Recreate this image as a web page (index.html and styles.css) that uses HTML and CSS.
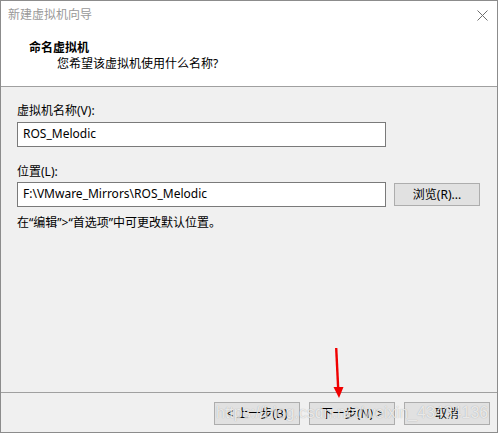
FILE: index.html
```html
<!DOCTYPE html>
<html lang="zh-CN">
<head>
<meta charset="utf-8">
<title>新建虚拟机向导</title>
<link rel="stylesheet" href="styles.css">
</head>
<body>
<div class="window">
  <div class="titlebar">
    <span class="title">新建虚拟机向导</span>
    <svg class="close" width="11" height="11" viewBox="0 0 11 11"><path d="M0.5 0.5 L10.5 10.5 M10.5 0.5 L0.5 10.5" stroke="#6e6e6e" stroke-width="1" fill="none"/></svg>
  </div>
  <div class="header">
    <div class="h-title">命名虚拟机</div>
    <div class="h-sub">您希望该虚拟机使用什么名称?</div>
  </div>
  <div class="content">
    <div class="label first">虚拟机名称(V):</div>
    <div class="row">
      <div class="input">ROS_Melodic</div>
    </div>
    <div class="label second">位置(L):</div>
    <div class="row">
      <div class="input">F:\VMware_Mirrors\ROS_Melodic</div>
      <div class="btn browse">浏览(R)...</div>
    </div>
    <div class="note">在“编辑”&gt;“首选项”中可更改默认位置。</div>
  </div>
  <div class="footer">
    <div class="btn nav">&lt; 上一步(B)</div>
    <div class="btn nav">下一步(N) &gt;</div>
    <div class="btn nav cancel">取消</div>
  </div>
  <svg class="arrow" width="20" height="56" viewBox="0 0 20 56"><path d="M5.2 1 L7.2 42" stroke="#f00000" stroke-width="2.4" fill="none"/><path d="M2.5 40 L12.5 40 L8 51 Z" fill="#f00000"/></svg>
  <div class="watermark">https://blog.csdn.net/weixin_43434136</div>
</div>
</body>
</html>
```
FILE: styles.css
```css
* { box-sizing: border-box; }
html, body { margin: 0; padding: 0; background: #ffffff; }
body {
  font-family: "Noto Sans", "Noto Sans CJK SC", sans-serif;
  font-size: 12px;
  color: #000;
}
.window {
  position: relative;
  width: 498px;
  height: 433px;
  border: 1px solid #8c8c8c;
  display: flex;
  flex-direction: column;
  background: #f0f0f0;
  overflow: hidden;
}
.titlebar {
  height: 28px;
  background: #fff;
  display: flex;
  align-items: center;
  justify-content: space-between;
  padding: 0 8px 0 7px;
}
.title { color: #999; line-height: 14px; }
.close { display: block; margin-right: 1px; }
.header {
  height: 58px;
  background: #fff;
  border-bottom: 1px solid #a0a0a0;
  padding: 11px 0 0 28px;
}
.h-title { font-weight: bold; line-height: 16px; }
.h-sub { padding-left: 28px; line-height: 16px; }
.content {
  flex: 1;
  padding: 16px 0 0 16px;
}
.label { line-height: 16px; }
.label.first { margin-bottom: 3px; }
.label.second { margin-top: 17px; margin-bottom: 2px; }
.row { display: flex; align-items: center; }
.input {
  width: 369px;
  height: 25px;
  border: 1px solid #7a7a7a;
  background: #fff;
  padding: 0 5px;
  line-height: 21px;
}
.btn {
  background: #e1e1e1;
  border: 1px solid #adadad;
  display: flex;
  align-items: center;
  justify-content: center;
  line-height: 14px;
}
.browse {
  width: 86px;
  height: 23px;
  margin-left: 8px;
}
.note { margin-top: 8px; line-height: 16px; }
.footer {
  height: 40px;
  border-top: 1px solid #a0a0a0;
  display: flex;
  justify-content: flex-end;
  padding: 9px 7px 0 0;
  gap: 9px;
}
.nav { width: 86px; height: 23px; }
.arrow { position: absolute; left: 330px; top: 346px; }
.watermark {
  position: absolute;
  left: 215px;
  top: 403px;
  font-family: "Liberation Sans", Arial, sans-serif;
  font-size: 16px;
  color: rgba(255, 255, 255, 0.75);
  text-shadow: 0 0 1px rgba(0, 0, 0, 0.3);
  white-space: nowrap;
  pointer-events: none;
}
```
